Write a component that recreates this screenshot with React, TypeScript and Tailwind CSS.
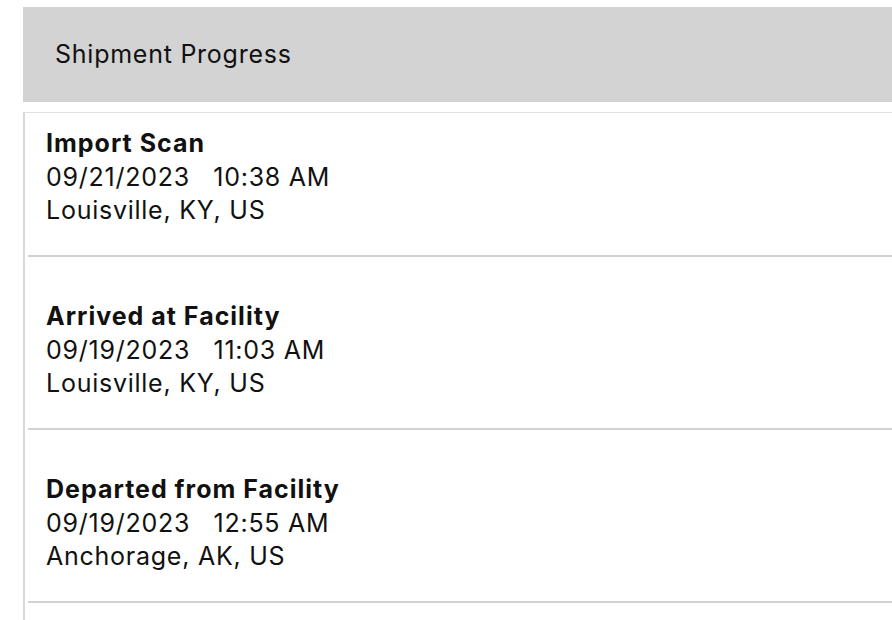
const events = [
  { title: "Import Scan", date: "09/21/2023", time: "10:38 AM", place: "Louisville, KY, US" },
  { title: "Arrived at Facility", date: "09/19/2023", time: "11:03 AM", place: "Louisville, KY, US" },
  { title: "Departed from Facility", date: "09/19/2023", time: "12:55 AM", place: "Anchorage, AK, US" },
];

export default function App() {
  return (
    <div
      className="flex h-[620px] w-[892px] flex-col overflow-hidden bg-white pt-[7px] pl-[23px] text-[25px] tracking-[0.03em] text-[#111]"
      style={{ fontFamily: 'Inter, "Liberation Sans", sans-serif' }}
    >
      <div className="flex h-[95px] shrink-0 items-center bg-[#d3d3d3] pl-[32px]">Shipment Progress</div>

      <div className="mt-[10px] flex-1 border-t border-l-2 border-t-[#e2e2e2] border-l-[#d9d9d9]">
        {events.map((event, index) => (
          <div
            key={event.title}
            className={
              index === 0
                ? "ml-[3px] border-b-2 border-[#d3d2cf] pt-[14px] pb-[27px] pl-[18px] leading-[33.5px]"
                : "ml-[3px] border-b-2 border-[#d3d2cf] pt-[43.5px] pb-[27px] pl-[18px] leading-[33.5px]"
            }
          >
            <p className="font-bold tracking-[0.04em]">{event.title}</p>
            <p className="whitespace-pre">
              {event.date}   {event.time}
            </p>
            <p>{event.place}</p>
          </div>
        ))}
      </div>
    </div>
  );
}
